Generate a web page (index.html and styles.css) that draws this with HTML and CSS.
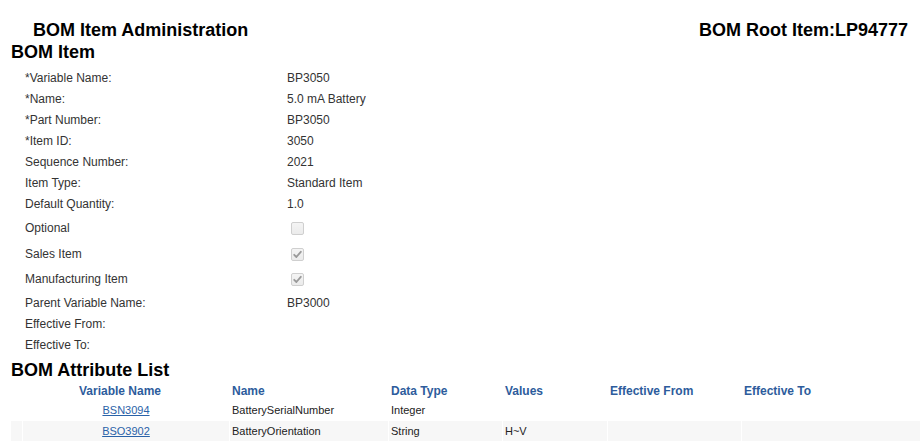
FILE: index.html
```html
<!DOCTYPE html>
<html>
<head>
<meta charset="utf-8">
<title>BOM Item Administration</title>
<link rel="stylesheet" href="styles.css">
</head>
<body>
<div class="page">
  <header class="topbar">
    <h1 class="title">BOM Item Administration</h1>
    <div class="root-item">BOM Root Item:LP94777</div>
  </header>
  <h2 class="section">BOM Item</h2>
  <div class="form">
    <div class="row"><span class="label">*Variable Name:</span><span class="value">BP3050</span></div>
    <div class="row"><span class="label">*Name:</span><span class="value">5.0 mA Battery</span></div>
    <div class="row"><span class="label">*Part Number:</span><span class="value">BP3050</span></div>
    <div class="row"><span class="label">*Item ID:</span><span class="value">3050</span></div>
    <div class="row"><span class="label">Sequence Number:</span><span class="value">2021</span></div>
    <div class="row"><span class="label">Item Type:</span><span class="value">Standard Item</span></div>
    <div class="row"><span class="label">Default Quantity:</span><span class="value">1.0</span></div>
    <div class="row row-check"><span class="label">Optional</span><span class="value"><span class="checkbox"></span></span></div>
    <div class="row row-check"><span class="label">Sales Item</span><span class="value"><span class="checkbox checked"><svg viewBox="0 0 13 13" width="13" height="13"><path d="M3.2 6.8 L5.4 9 L9.8 3.8" fill="none" stroke="#9a9a9a" stroke-width="1.8" stroke-linecap="round" stroke-linejoin="round"/></svg></span></span></div>
    <div class="row row-check row-check-last"><span class="label">Manufacturing Item</span><span class="value"><span class="checkbox checked"><svg viewBox="0 0 13 13" width="13" height="13"><path d="M3.2 6.8 L5.4 9 L9.8 3.8" fill="none" stroke="#9a9a9a" stroke-width="1.8" stroke-linecap="round" stroke-linejoin="round"/></svg></span></span></div>
    <div class="row row-parent"><span class="label">Parent Variable Name:</span><span class="value">BP3000</span></div>
    <div class="row"><span class="label">Effective From:</span><span class="value"></span></div>
    <div class="row"><span class="label">Effective To:</span><span class="value"></span></div>
  </div>
  <h2 class="section section-list">BOM Attribute List</h2>
  <table class="attr-table">
    <colgroup>
      <col class="c0"><col class="c1"><col class="c2"><col class="c3"><col class="c4"><col class="c5"><col class="c6">
    </colgroup>
    <thead>
      <tr>
        <th colspan="2" class="center">Variable Name</th>
        <th>Name</th>
        <th>Data Type</th>
        <th>Values</th>
        <th>Effective From</th>
        <th>Effective To</th>
      </tr>
    </thead>
    <tbody>
      <tr>
        <td></td>
        <td class="center"><a href="#">BSN3094</a></td>
        <td>BatterySerialNumber</td>
        <td>Integer</td>
        <td></td>
        <td></td>
        <td></td>
      </tr>
      <tr class="alt">
        <td></td>
        <td class="center"><a href="#">BSO3902</a></td>
        <td>BatteryOrientation</td>
        <td>String</td>
        <td>H~V</td>
        <td></td>
        <td></td>
      </tr>
    </tbody>
  </table>
</div>
</body>
</html>
```

FILE: styles.css
```css
html, body {
  margin: 0;
  padding: 0;
  background: #ffffff;
}

body {
  font-family: "Liberation Sans", Arial, sans-serif;
  font-size: 12px;
  color: #333333;
}

.page {
  padding-top: 19px;
}

.topbar {
  display: flex;
  justify-content: space-between;
  align-items: baseline;
  padding: 0 13px 0 33px;
  height: 22px;
}

.title,
.root-item {
  margin: 0;
  font-size: 18px;
  font-weight: bold;
  line-height: 22px;
  color: #000000;
}

.section {
  margin: 0;
  padding-left: 11px;
  font-size: 18px;
  font-weight: bold;
  line-height: 22px;
  color: #000000;
}

.form {
  margin-top: 5px;
  display: flex;
  flex-direction: column;
}

.row {
  display: grid;
  grid-template-columns: 262px 1fr;
  padding-left: 25px;
  height: 21px;
  line-height: 21px;
}

.row-check {
  height: 26px;
  line-height: 26px;
}

.row-check-last {
  height: 25px;
  line-height: 25px;
}

.row-parent {
  height: 22px;
  line-height: 22px;
}

.value {
  display: flex;
  align-items: center;
}

.checkbox {
  display: inline-block;
  box-sizing: border-box;
  width: 13px;
  height: 13px;
  margin: 0 3px 0 4px;
  border: 1px solid #cfcfcf;
  border-radius: 2px;
  background: linear-gradient(#f4f4f4, #ebebeb);
  position: relative;
}

.checkbox svg {
  position: absolute;
  left: -1px;
  top: -1px;
}

.section-list {
  margin-top: 5px;
  line-height: 18px;
}

.attr-table {
  margin-left: 10px;
  width: 911px;
  table-layout: fixed;
  border-collapse: separate;
  border-spacing: 1px;
}

.c0 { width: 11px; }
.c1 { width: 206px; }
.c2 { width: 158px; }
.c3 { width: 113px; }
.c4 { width: 104px; }
.c5 { width: 133px; }

.attr-table th {
  text-align: left;
  font-size: 12px;
  font-weight: bold;
  color: #2d5c9c;
  padding: 4px 2px 1px;
  line-height: 14px;
  white-space: nowrap;
}

.attr-table td {
  font-size: 11px;
  padding: 3px 2px 3px;
  line-height: 14px;
  white-space: nowrap;
  color: #222222;
}

.attr-table .center {
  text-align: center;
}

.attr-table tr.alt td {
  background: #f7f7f7;
}

.attr-table a {
  color: #2a62a8;
  text-decoration: underline;
}
```
